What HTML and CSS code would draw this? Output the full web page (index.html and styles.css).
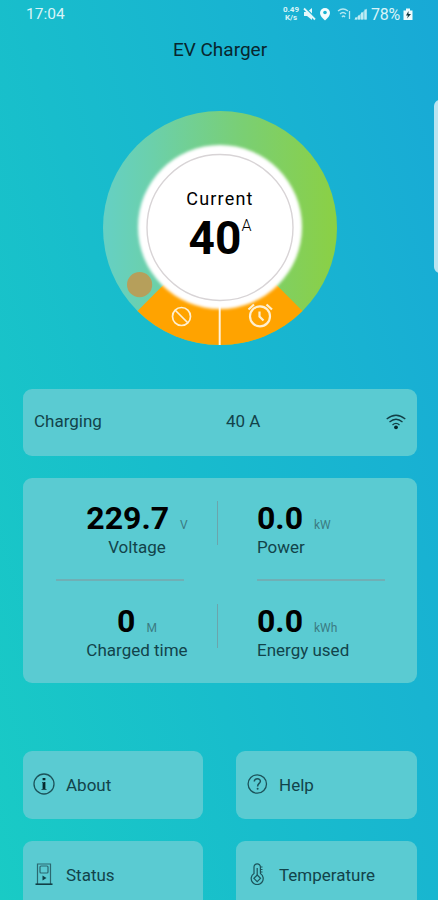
FILE: index.html
```html
<!DOCTYPE html>
<html lang="en">

  <head>
    <meta charset="UTF-8">
    <meta name="viewport" content="width=device-width, initial-scale=1.0">
    <title>EV Charger</title>
    <link rel="stylesheet" href="styles.css">
  </head>

  <body>
    <div class="status-bar">
      <span class="clock">17:04</span>
      <span class="speed"><span>0.49</span><span>K/s</span></span>
      <svg class="tray" width="68" height="16" viewBox="0 0 68 16">
        <path d="M1 6h3l5-4v12l-5-4H1z" fill="#e4f8fb" />
        <path d="M2 1.500l11 11" stroke="#19b3d1" stroke-width="1.500" />
        <path d="M1 2.500l11 11" stroke="#e4f8fb" stroke-width="1.800" />
        <path d="M22 2a5 5 0 0 0-5 5c0 3.500 5 7.500 5 7.500s5-4 5-7.500a5 5 0 0 0-5-5z" fill="#f2fcfd" />
        <circle cx="22" cy="6.500" r="1.800" fill="#19b3d1" />
        <path d="M35 5q5-4 10 0M37 8q3-3 6 0M39 11q1.500-2 3 0M46.500 5v8" fill="none" stroke="#b5e7f1" stroke-width="1.300" />
        <path d="M51 13.500l13-11v11z" fill="#80d5e6" />
        <path d="M53 13.500v-2M56 13.500v-4M59 13.500v-7M62.500 13.500v-10" stroke="#c0ecf4" stroke-width="2" />
      </svg>
      <span class="percent">78%</span>
      <svg class="battery" width="10" height="13" viewBox="0 0 10 13">
        <path d="M.5 2.500h2.500V.5h4v2h2.500V12H.5z" fill="#effbfc" />
        <path d="M5.500 3L3 7.500h2L4 10.500l4-4.500H5.500z" fill="#143840" />
      </svg>
    </div>

    <h1 class="title">EV Charger</h1>

    <div class="dial">
      <svg class="dial-ring" width="236" height="236" viewBox="0 0 236 236">
        <defs>
          <linearGradient id="ring" x1="0" y1="0.500" x2="1" y2="0.500">
            <stop offset="0" stop-color="#65d0c4" />
            <stop offset="0.200" stop-color="#6bd0ac" />
            <stop offset="0.600" stop-color="#7acf73" />
            <stop offset="1" stop-color="#8bd044" />
          </linearGradient>
          <filter id="soft" x="-10%" y="-10%" width="120%" height="120%">
            <feGaussianBlur stdDeviation="1.500" />
          </filter>
        </defs>
        <circle cx="118" cy="118" r="117" fill="url(#ring)" />
        <path d="M118 118L200.500 201A117 117 0 0 1 35.500 201z" fill="#ffa300" />
        <path d="M117.700 190v45" stroke="#fff3dc" stroke-width="2" />
        <circle cx="37.600" cy="174.700" r="12.600" fill="#b69f5b" />
        <circle cx="118" cy="117" r="82" fill="#fff" filter="url(#soft)" />
        <circle cx="118" cy="117.500" r="73" fill="#fff" stroke="#d8d4d6" stroke-width="1.400" />
        <g fill="none" stroke="#fff0d0" stroke-width="1.700">
          <circle cx="79.500" cy="206.500" r="9" />
          <path d="M73 200l13 13" />
          <g stroke-width="2.200">
            <circle cx="158" cy="206.300" r="10" />
            <path d="M146.500 199.500l5.500-5M164.500 194.500l5.500 5M157.500 201.500v5l4 4" />
          </g>
        </g>
      </svg>
      <div class="reading">
        <div class="reading-label">Current</div>
        <div class="reading-value">40<sup>A</sup></div>
      </div>
    </div>

    <div class="card charging">
      <span>Charging</span>
      <span>40 A</span>
      <svg class="wifi" width="20" height="18" viewBox="0 0 20 18">
        <g fill="none" stroke="#123f46" stroke-width="1.300">
          <path d="M.7 6q9.300-7.500 18.600 0M3.500 9q6.500-5.500 13 0M6.500 12q3.500-3.200 7 0" />
        </g>
        <circle cx="10" cy="14.300" r="1.900" fill="#06282c" />
      </svg>
    </div>

    <div class="card stats">
      <div class="stat stat-left">
        <div class="value">229.7<small>V</small></div>
        <div class="label">Voltage</div>
      </div>
      <div class="divider"></div>
      <div class="stat">
        <div class="value">0.0<small>kW</small></div>
        <div class="label">Power</div>
      </div>
      <div class="rule"></div>
      <div></div>
      <div class="rule"></div>
      <div class="stat stat-left">
        <div class="value">0<small>M</small></div>
        <div class="label">Charged time</div>
      </div>
      <div class="divider"></div>
      <div class="stat">
        <div class="value">0.0<small>kWh</small></div>
        <div class="label">Energy used</div>
      </div>
    </div>

    <div class="menu">
      <div class="card item">
        <svg class="icon" width="22" height="22" viewBox="0 0 22 22">
          <circle cx="11" cy="11" r="10" fill="none" stroke="#1c535a" stroke-width="1.300" />
          <path d="M11 5v2.200M11 9v8" stroke="#06282c" stroke-width="2.800" />
          <path d="M9 9.500h2M8.500 16.500h5" stroke="#1c535a" />
        </svg>
        <span>About</span>
      </div>
      <div class="card item">
        <svg class="icon" width="22" height="22" viewBox="0 0 22 22">
          <g fill="none" stroke="#1c535a" stroke-width="1.300">
            <circle cx="11.300" cy="11" r="9.200" />
            <path d="M8.300 8.500c0-4 6.500-3.500 6 0c-.3 2-2.700 2-2.700 5" stroke-width="1.500" />
          </g>
          <circle cx="11.600" cy="15.800" r="1" fill="#1c535a" />
        </svg>
        <span>Help</span>
      </div>
      <div class="card item">
        <svg class="icon" width="22" height="22" viewBox="0 0 22 22">
          <g fill="none" stroke="#2b6870" stroke-width="1.200">
            <path d="M4.500 21V1h13v20" />
            <rect x="7" y="3" width="8" height="7" rx="1" />
            <path d="M2.500 21.200h17" stroke="#123f46" stroke-width="1.600" />
          </g>
          <path d="M9.500 12.500l4 2.500-4 2.500z" fill="#123f46" />
        </svg>
        <span>Status</span>
      </div>
      <div class="card item">
        <svg class="icon" width="22" height="22" viewBox="0 0 22 22">
          <g fill="none" stroke="#1c535a" stroke-width="1.200">
            <path d="M8 10.500V4a3.200 3.200 0 0 1 6.400 0v6.500a6 6 0 1 1-6.400 0z" />
            <path d="M11.200 12l3.300 3.300-3.300 3.300-3.300-3.300z" />
            <path d="M11.200 5v7M14.500 4h2M14.500 6.500h2M14.500 9h2" />
          </g>
        </svg>
        <span>Temperature</span>
      </div>
    </div>

    <div class="edge-handle"></div>
  </body>

</html>
```

FILE: styles.css
```css
* {
  box-sizing: border-box;
}

body {
  position: relative;
  height: 900px;
  margin: 0;
  padding: 0 21px 0 23px;
  overflow: hidden;
  background: linear-gradient(74deg, #19cbc5, #18bdcc 40%, #18b2d2 75%, #18a9d6);
  color: #12434a;
  font-family: Roboto, sans-serif;
  font-size: 17px;
}

.status-bar {
  display: flex;
  align-items: center;
  height: 28px;
  padding-left: 3px;
  color: #d8f4f8;
  font-size: 15.5px;
}

.speed {
  display: flex;
  flex-direction: column;
  width: 18px;
  margin-left: auto;
  font-size: 8px;
  font-weight: bold;
  line-height: 8px;
  text-align: center;
}

.tray {
  margin-left: 3px;
}

.percent {
  width: 32px;
  font-size: 16px;
  letter-spacing: -0.2px;
}

.battery {
  margin-right: 4px;
}

.title {
  margin: 10px 0 0;
  color: #08262e;
  font-size: 19px;
  font-weight: normal;
  line-height: 24px;
  text-align: center;
}

.dial {
  display: grid;
  justify-content: center;
  margin-top: 48px;
}

.dial-ring,
.reading {
  grid-area: 1 / 1;
}

.reading {
  padding-top: 78px;
  color: #000;
  text-align: center;
}

.reading-label {
  font-size: 18px;
  letter-spacing: 1.2px;
  line-height: 22px;
}

.reading-value {
  display: flex;
  justify-content: center;
  font-size: 46px;
  font-weight: bold;
  line-height: 56px;
}

.reading-value sup {
  padding-top: 7px;
  font-size: 16px;
  font-weight: 300;
  line-height: 18px;
}

.card {
  background: #5acbd2;
  border-radius: 9px;
}

.charging {
  display: grid;
  grid-template-columns: 192px 1fr 20px;
  align-items: center;
  height: 67px;
  margin-top: 43px;
  padding: 0 11px 3px;
}

.wifi {
  margin-top: 2px;
}

.stats {
  display: grid;
  grid-template-columns: 128px 1fr 128px;
  grid-template-rows: 78px 3px 1fr;
  height: 205px;
  margin-top: 22px;
  padding: 23px 32px 0 33px;
}

.stat-left {
  margin: 0 -4px 0 30px;
  text-align: center;
}

.value {
  height: 36px;
  color: #000;
  font-size: 32px;
  font-weight: bold;
  line-height: 35px;
  white-space: nowrap;
}

.value small {
  margin-left: 11px;
  color: #3b7b82;
  font-size: 12px;
  font-weight: normal;
}

.label {
  line-height: 20px;
}

.divider {
  justify-self: center;
  width: 1px;
  height: 44px;
  margin-left: -7px;
  background: #6ba5ac;
}

.rule {
  height: 2px;
  background: #70afb5;
}

/* second row of readings */
.stats > :nth-child(n+7) {
  margin-top: 22px;
}

.menu {
  display: grid;
  grid-template-columns: 180px 181px;
  gap: 22px 33px;
  margin-top: 68px;
}

.item {
  display: flex;
  align-items: center;
  height: 68px;
  padding-left: 10px;
}

.item .icon {
  margin: -3px 11px 0 0;
}

/* handle of the side panel, half off the screen */
.edge-handle {
  position: absolute;
  top: 100px;
  right: -9px;
  width: 13px;
  height: 173px;
  border-radius: 6px;
  background: #b9e4f0;
}
```
